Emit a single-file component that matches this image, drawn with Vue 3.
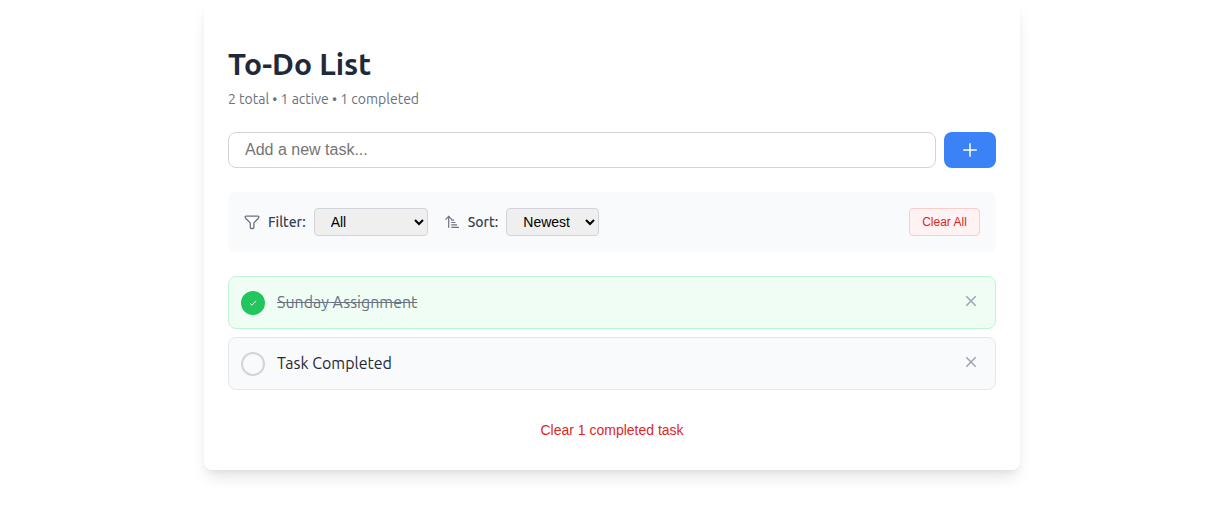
<script setup>
import { ref } from 'vue'
const tasks = ref([
  { id: 1, text: 'Sunday Assignment', done: true },
  { id: 2, text: 'Task Completed', done: false },
])
</script>

<template>
  <main class="page">
    <section class="card">
      <h1>To-Do List</h1>
      <p class="stats">2 total • 1 active • 1 completed</p>
      <div class="add">
        <input type="text" placeholder="Add a new task..." />
        <button class="plus" aria-label="Add"><svg width="20" height="20" viewBox="0 0 20 20" fill="none" stroke="#fff" stroke-width="1.5"><path d="M10 3.200v13.600M3.200 10h13.600" /></svg></button>
      </div>
      <div class="tools">
        <svg class="ic" width="16" height="16" viewBox="0 0 16 16" fill="none" stroke="#6b7280" stroke-width="1.3" stroke-linejoin="round"><path d="M2 2.100h12q1 0 .8 1-.2.900-.9 1.600L9.900 8.900v4.600q0 1-1 1H7.300q-1 0-1-1V8.900L2.100 4.700Q1.400 4 1.200 3.100 1 2.100 2 2.100z" /></svg>
        <span class="lbl">Filter:</span>
        <select class="filter"><option>All</option><option>Active</option><option>Completed</option></select>
        <svg class="ic sort" width="16" height="16" viewBox="0 0 16 16" fill="none" stroke="#6b7280" stroke-width="1.2"><path d="M4.700 13.800V2.600M1.500 5.600 4.700 2.400 7.900 5.600M7.300 6.200h2.800M7.300 8.500h4.300M7.300 10.900h5.800M7.300 13.400h7.600" /></svg>
        <span class="lbl">Sort:</span>
        <select class="order"><option>Newest</option><option>Oldest</option></select>
        <button class="clear-all">Clear All</button>
      </div>
      <ul>
        <li v-for="t in tasks" :key="t.id" :class="{ done: t.done }">
          <button class="check"><svg v-if="t.done" width="8" height="8" viewBox="0 0 8 8" fill="none" stroke="#fff" stroke-width=".85"><path d="M1 4.300 3 6.200 7 1.800" /></svg></button>
          <span class="task">{{ t.text }}</span>
          <button class="del"><svg width="12" height="12" viewBox="0 0 12 12" fill="none" stroke="#9ca3af" stroke-width="1.5"><path d="m1.300 1.300 9.400 9.400M10.700 1.300 1.300 10.700" /></svg></button>
        </li>
      </ul>
      <button class="clear-done">Clear 1 completed task</button>
    </section>
  </main>
</template>

<style>
body { background: #fff; }
</style>
<style scoped>
* { box-sizing: border-box; }
.page { height: 516px; overflow: hidden; padding-left: 204px; font-family: Ubuntu, system-ui, "Open Sans", sans-serif; }
.card { width: 816px; height: 470px; padding: 44px 24px 0; border-radius: 8px; background: #fff; box-shadow: 0 10px 15px -3px rgba(0,0,0,.1), 0 4px 6px -2px rgba(0,0,0,.05); }
svg { display: block; }
h1 { margin: 0; height: 44px; line-height: 40px; font-size: 30px; font-weight: 700; color: #1f2937; }
.stats { margin: 0 0 24px; height: 20px; line-height: 22px; font-size: 14px; color: #6b7280; }
button, select, input { font-family: "Liberation Sans", Arial, sans-serif; margin: 0; }
button { padding: 0; border: 0; background: transparent; }
.add { display: flex; gap: 8px; height: 36px; }
input { flex: 1; padding: 0 16px; border: 1px solid #d1d5db; border-radius: 8px; font-size: 16px; outline: none; }
.plus { width: 52px; border-radius: 8px; background: #3b82f6; display: grid; place-items: center; }
.tools { display: flex; align-items: center; height: 60px; margin: 24px 0; padding: 0 16px; border-radius: 8px; background: #f9fafb; }
.lbl { margin: 0 8px; font-size: 14px; font-weight: 500; line-height: 20px; color: #374151; }
select { height: 28px; border: 1px solid #d1d5db; border-radius: 4px; padding: 0 12px; font-size: 14px; background: #efefef; color: #000; }
.filter { width: 114px; }
.order { width: 93px; }
.sort { margin-left: 16px; }
.clear-all { margin-left: auto; width: 71px; height: 28px; border: 1px solid #fecaca; border-radius: 4px; background: #fef2f2; color: #dc2626; font-size: 12px; }
ul { margin: 0; padding: 0; list-style: none; display: grid; gap: 8px; }
li { display: flex; align-items: center; height: 53px; padding: 0 12px; border: 1px solid #e5e7eb; border-radius: 8px; background: #f9fafb; }
li.done { background: #f0fdf4; border-color: #bbf7d0; }
.check { width: 24px; height: 24px; margin-right: 12px; border: 2px solid #d1d5db; border-radius: 50%; display: grid; place-items: center; }
.done .check { border-color: #22c55e; background: #22c55e; }
.task { margin-bottom: 2px; font-size: 16px; line-height: 24px; color: #1f2937; }
.done .task { color: #6b7280; text-decoration: line-through; }
.del { margin: 0 6px 4px auto; }
.clear-done { display: block; margin: 32px auto 0; font-size: 14px; line-height: 16px; color: #dc2626; }
</style>
